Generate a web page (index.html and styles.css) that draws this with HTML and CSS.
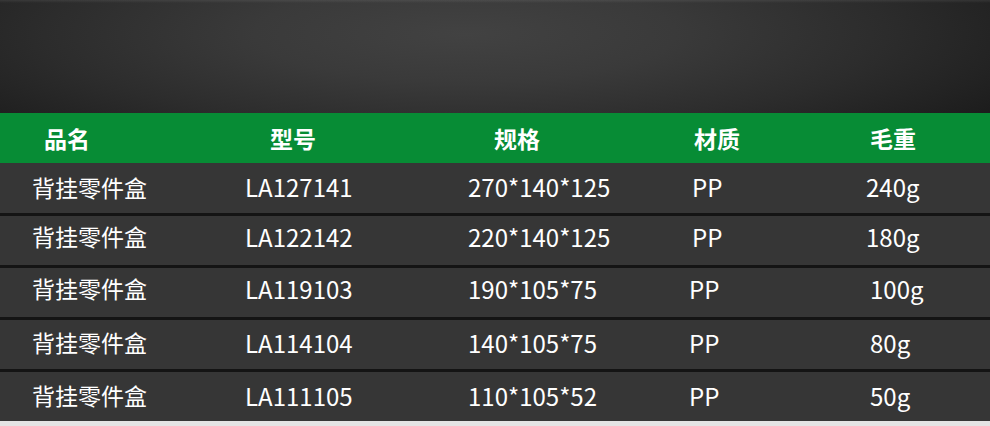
FILE: index.html
```html
<!DOCTYPE html>
<html lang="zh">
<head>
<meta charset="utf-8">
<link rel="stylesheet" href="styles.css">
</head>
<body>
<div class="page">
  <div class="hero"></div>
  <div class="table">
    <div class="row head">
      <div class="c c1">品名</div>
      <div class="c c2">型号</div>
      <div class="c c3">规格</div>
      <div class="c c4">材质</div>
      <div class="c c5">毛重</div>
    </div>
    <div class="row data r1">
      <div class="c c1 cjk">背挂零件盒</div>
      <div class="c c2">LA127141</div>
      <div class="c c3">270*140*125</div>
      <div class="c c4">PP</div>
      <div class="c c5">240g</div>
    </div>
    <div class="row data r2">
      <div class="c c1 cjk">背挂零件盒</div>
      <div class="c c2">LA122142</div>
      <div class="c c3">220*140*125</div>
      <div class="c c4">PP</div>
      <div class="c c5">180g</div>
    </div>
    <div class="row data r3 shift">
      <div class="c c1 cjk">背挂零件盒</div>
      <div class="c c2">LA119103</div>
      <div class="c c3">190*105*75</div>
      <div class="c c4">PP</div>
      <div class="c c5">100g</div>
    </div>
    <div class="row data r4 shift">
      <div class="c c1 cjk">背挂零件盒</div>
      <div class="c c2">LA114104</div>
      <div class="c c3">140*105*75</div>
      <div class="c c4">PP</div>
      <div class="c c5">80g</div>
    </div>
    <div class="row data r5 shift">
      <div class="c c1 cjk">背挂零件盒</div>
      <div class="c c2">LA111105</div>
      <div class="c c3">110*105*52</div>
      <div class="c c4">PP</div>
      <div class="c c5">50g</div>
    </div>
  </div>
</div>
</body>
</html>
```

FILE: styles.css
```css
* { box-sizing: border-box; }
html, body { margin: 0; padding: 0; }
body {
  background: #e4e4e4;
  font-family: "Noto Sans CJK SC", "Noto Sans", sans-serif;
  color: #fff;
}
.page {
  width: 990px;
  height: 426px;
  overflow: hidden;
  background: #e4e4e4;
}
.hero {
  height: 113px;
  background:
    linear-gradient(to bottom, rgba(255,255,255,0.08) 0, rgba(255,255,255,0) 3px),
    radial-gradient(ellipse 85% 170% at 47% 30%, #424242 0%, #3a3a3a 25%, #2c2c2c 50%, #1c1c1c 75%, #131313 100%);
}
.table {
  display: flex;
  flex-direction: column;
  background: #141414;
  gap: 3px;
}
.row {
  display: grid;
  align-items: center;
  padding-left: 32px;
  grid-template-columns: 213px 223px 224px 176px 1fr;
}
.head {
  height: 50px;
  background: #078c35;
  font-weight: 700;
  font-size: 23px;
  margin-bottom: -3px;
}
.head .c1 { padding-left: 12px; }
.head .c2 { padding-left: 25px; }
.head .c3 { padding-left: 26px; }
.head .c4 { padding-left: 2px; }
.head .c5 { padding-left: 2px; }
.data {
  height: 49px;
  background: #363636;
  font-size: 24px;
}
.data.r1 { height: 50px; padding-bottom: 2px; }
.data.r2, .data.r3 { padding-bottom: 8px; }
.data.r4 { padding-bottom: 4px; }
.data.r5 { padding-bottom: 2px; }
.data .cjk { font-size: 23px; }
.c { white-space: nowrap; line-height: 1; }
.r1 .c5, .r2 .c5 { margin-left: -2px; }
.shift .c4 { margin-left: -3px; }
.shift .c5 { padding-left: 2px; }
```
